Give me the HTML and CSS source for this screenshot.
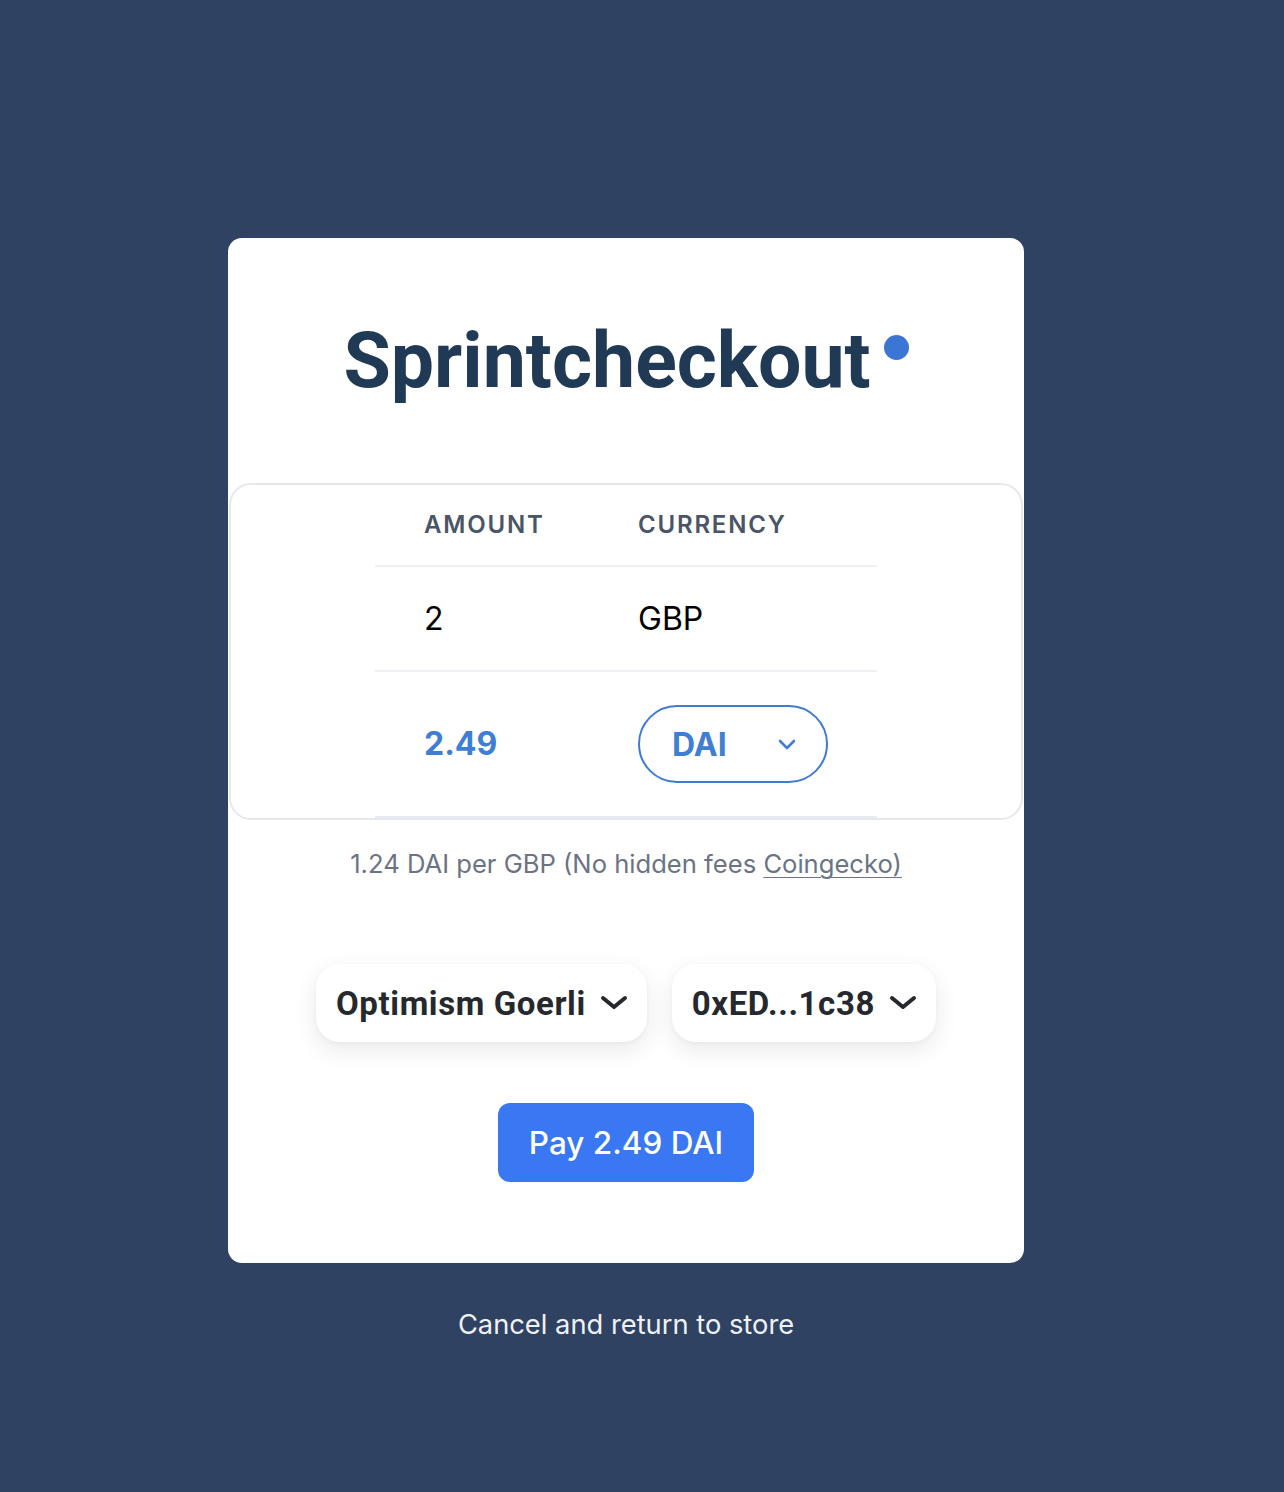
FILE: index.html
```html
<!DOCTYPE html>
<html lang="en">
<head>
<meta charset="utf-8">
<title>Sprintcheckout</title>
<link rel="stylesheet" href="styles.css">
</head>
<body>
  <main class="card">
    <h1 class="brand">
      <span class="brand-name">Sprintcheckout</span>
      <span class="brand-dot"></span>
    </h1>

    <section class="quote-box">
      <div class="quote-table">
        <div class="row row-head">
          <div class="cell">Amount</div>
          <div class="cell">Currency</div>
        </div>
        <div class="row row-fiat">
          <div class="cell">2</div>
          <div class="cell">GBP</div>
        </div>
        <div class="row row-crypto">
          <div class="cell amount-crypto">2.49</div>
          <div class="cell">
            <button class="token-pill" type="button">
              <span>DAI</span>
              <svg class="pill-chevron" width="18" height="11" viewBox="0 0 18 11" aria-hidden="true">
                <path d="M2 2 L9 9 L16 2" fill="none" stroke="currentColor" stroke-width="2.6" stroke-linecap="round" stroke-linejoin="round"/>
              </svg>
            </button>
          </div>
        </div>
      </div>
    </section>

    <p class="rate">1.24 DAI per GBP (No hidden fees <a class="rate-link" href="#">Coingecko)</a></p>

    <div class="wallet-row">
      <button class="wallet-btn" type="button">
        <span>Optimism Goerli</span>
        <svg class="wallet-chevron" width="28" height="16" viewBox="0 0 28 16" aria-hidden="true">
          <path d="M3 3 L14 12 L25 3" fill="none" stroke="currentColor" stroke-width="4" stroke-linecap="round" stroke-linejoin="round"/>
        </svg>
      </button>
      <button class="wallet-btn" type="button">
        <span>0xED...1c38</span>
        <svg class="wallet-chevron" width="28" height="16" viewBox="0 0 28 16" aria-hidden="true">
          <path d="M3 3 L14 12 L25 3" fill="none" stroke="currentColor" stroke-width="4" stroke-linecap="round" stroke-linejoin="round"/>
        </svg>
      </button>
    </div>

    <div class="pay-wrap">
      <button class="pay-btn" type="button">Pay 2.49 DAI</button>
    </div>
  </main>

  <p class="cancel">Cancel and return to store</p>
</body>
</html>
```

FILE: styles.css
```css
* {
  box-sizing: border-box;
}

html, body {
  margin: 0;
  padding: 0;
}

body {
  background: #2f4262;
  font-family: Inter, "Noto Sans", sans-serif;
  min-height: 1492px;
  overflow: hidden;
  padding-right: 32px;
}

.card {
  width: 796px;
  margin: 238px auto 0;
  background: #ffffff;
  border-radius: 14px;
  padding: 78px 1px 81px;
}

.brand {
  margin: 0;
  display: flex;
  justify-content: center;
  align-items: flex-start;
  gap: 13px;
  font-family: Roboto, "Liberation Sans", sans-serif;
  font-weight: 700;
  font-size: 77px;
  line-height: 91px;
  color: #203a55;
}

.brand-dot {
  width: 25px;
  height: 25px;
  border-radius: 50%;
  background: #3b76d4;
  margin-top: 19px;
}

.quote-box {
  margin-top: 76px;
  border: 2px solid #e6e8ec;
  border-radius: 22px;
  display: flex;
  justify-content: center;
}

.quote-table {
  width: 502px;
}

.row {
  display: grid;
  grid-template-columns: 214px 288px;
  border-bottom: 2px solid #eef0f3;
  align-items: center;
}

.cell {
  padding-left: 49px;
}

.row-head {
  height: 82px;
  font-size: 24px;
  line-height: 32px;
  font-weight: 600;
  text-transform: uppercase;
  letter-spacing: 0.075em;
  color: #4a5567;
}

.row-fiat {
  height: 105px;
  font-size: 32px;
  line-height: 48px;
  color: #000000;
}

.row-crypto {
  height: 146px;
  border-bottom-color: #e6ebf3;
}

.amount-crypto {
  font-size: 32px;
  line-height: 48px;
  font-weight: 700;
  color: #3f7ed5;
}

.token-pill {
  width: 190px;
  height: 78px;
  border: 2px solid #3f7bd1;
  border-radius: 9999px;
  background: #ffffff;
  display: flex;
  align-items: center;
  justify-content: space-between;
  padding: 0 30px 0 32px;
  font-family: Inter, "Noto Sans", sans-serif;
  font-size: 32px;
  font-weight: 700;
  color: #3f7ed5;
  cursor: pointer;
}

.pill-chevron {
  color: #3f7ed5;
}

.rate {
  margin: 28px 0 0;
  text-align: center;
  font-size: 25.6px;
  line-height: 32px;
  color: #6b7384;
}

.rate-link {
  color: #6b7384;
  text-decoration: underline;
  text-underline-offset: 4px;
  text-decoration-thickness: 1px;
}

.wallet-row {
  margin-top: 84px;
  display: flex;
  justify-content: center;
  gap: 25px;
}

.wallet-btn {
  height: 78px;
  padding: 0 19px 0 20px;
  border: none;
  border-radius: 24px;
  background: #ffffff;
  box-shadow: 0 8px 24px rgba(0, 0, 0, 0.09), 0 1px 4px rgba(0, 0, 0, 0.04);
  display: flex;
  align-items: center;
  gap: 14px;
  font-family: Roboto, "Liberation Sans", sans-serif;
  font-weight: 700;
  font-size: 33px;
  letter-spacing: 0.6px;
  color: #25292e;
  cursor: pointer;
}

.wallet-chevron {
  color: #25292e;
}

.pay-wrap {
  margin-top: 61px;
  display: flex;
  justify-content: center;
}

.pay-btn {
  height: 79px;
  padding: 0 31px;
  border: none;
  border-radius: 12px;
  background: #3a77f2;
  color: #ffffff;
  font-family: Inter, "Noto Sans", sans-serif;
  font-size: 31.5px;
  font-weight: 500;
  cursor: pointer;
}

.cancel {
  margin: 42px 0 0;
  text-align: center;
  font-size: 27.3px;
  line-height: 40px;
  color: #eef1f6;
}
```
